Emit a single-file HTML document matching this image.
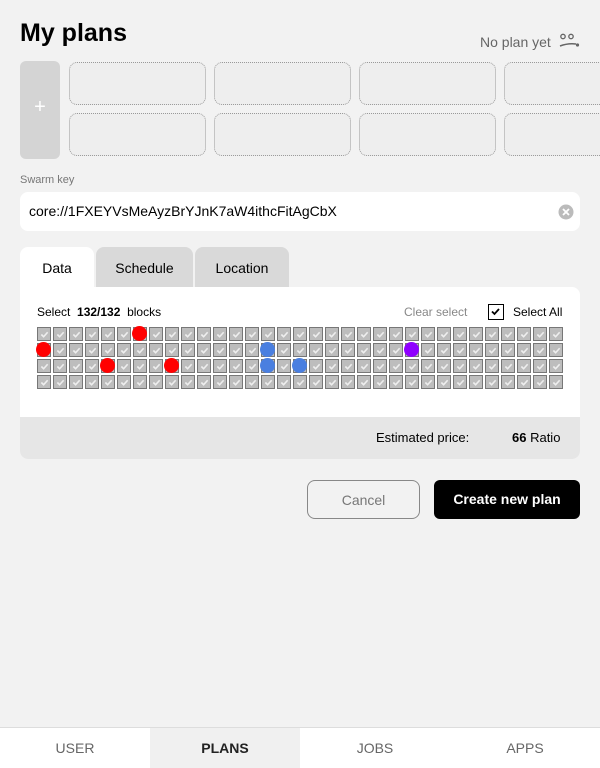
<!DOCTYPE html>
<html><head><meta charset="utf-8"><style>
*{box-sizing:border-box;margin:0;padding:0}
body{width:600px;height:768px;background:#f2f2f2;font-family:"Liberation Sans",sans-serif;position:relative;overflow:hidden;color:#000}
.abs{position:absolute}
h1{position:absolute;left:20px;top:19px;font-size:25px;font-weight:bold}
.slot{position:absolute;border:1px dotted #999;border-radius:8px;background:#eee;width:137px;height:43px}
.tab{position:absolute;top:247px;height:40px;border-radius:8px 8px 0 0;background:#d9d9d9;font-size:14px;text-align:center;line-height:42px}
.cell{position:absolute;width:14px;height:14px;background:#bdbdbd;border:1px solid #777}
.cell svg{position:absolute;left:2px;top:2px}
.dot{position:absolute;width:15px;height:15px;border-radius:50%}
.nav{position:absolute;top:728px;height:40px;width:150px;text-align:center;line-height:40px;font-size:14px;color:#666}
</style></head><body>
<h1>My plans</h1>
<div class="abs" style="left:480px;top:34px;font-size:14px;color:#666">No plan yet</div>
<svg class="abs" style="left:558px;top:33px" width="24" height="16" viewBox="0 0 24 16"><circle cx="5" cy="3.5" r="2.2" fill="none" stroke="#666" stroke-width="1.3"/><circle cx="13" cy="3.5" r="2.2" fill="none" stroke="#666" stroke-width="1.3"/><path d="M2 13 Q10 10 18 11" fill="none" stroke="#666" stroke-width="1.5"/><circle cx="19.5" cy="12" r="1.6" fill="#666"/></svg>
<div class="abs" style="left:20px;top:61px;width:40px;height:98px;background:#d4d4d4;border-radius:6px;color:#fff;font-size:20px;text-align:center;line-height:92px">+</div>
<div class="slot" style="left:69px;top:62px"></div><div class="slot" style="left:214px;top:62px"></div><div class="slot" style="left:359px;top:62px"></div><div class="slot" style="left:504px;top:62px"></div>
<div class="slot" style="left:69px;top:113px"></div><div class="slot" style="left:214px;top:113px"></div><div class="slot" style="left:359px;top:113px"></div><div class="slot" style="left:504px;top:113px"></div>
<div class="abs" style="left:20px;top:174px;font-size:11px;color:#777">Swarm key</div>
<div class="abs" style="left:20px;top:192px;width:560px;height:39px;background:#fff;border-radius:8px;font-size:14px;line-height:39px;padding-left:9px">core://1FXEYVsMeAyzBrYJnK7aW4ithcFitAgCbX</div>
<svg class="abs" style="left:558px;top:204px" width="16" height="16" viewBox="0 0 16 16"><circle cx="8" cy="8" r="7.5" fill="#bbb"/><path d="M5 5L11 11M11 5L5 11" stroke="#fff" stroke-width="1.8"/></svg>
<div class="tab" style="left:20px;width:74px;background:#fff">Data</div>
<div class="tab" style="left:96px;width:97px">Schedule</div>
<div class="tab" style="left:195px;width:94px">Location</div>
<div class="abs" style="left:20px;top:287px;width:560px;height:172px;background:#fff;border-radius:0 8px 8px 8px;overflow:hidden">
<div class="abs" style="left:0;top:130px;width:560px;height:42px;background:#e6e6e6"></div>
<div class="abs" style="left:356px;top:143px;font-size:13px">Estimated price:</div>
<div class="abs" style="left:492px;top:143px;font-size:13px"><b>66</b> Ratio</div>
</div>
<div class="abs" style="left:37px;top:305px;font-size:12px">Select&nbsp; <b>132/132</b>&nbsp; blocks</div>
<div class="abs" style="left:404px;top:305px;font-size:12px;color:#888">Clear select</div>
<div class="abs" style="left:488px;top:304px;width:16px;height:16px;border:1.5px solid #000;background:#fff"><svg width="13" height="13" viewBox="0 0 13 13" style="position:absolute;left:0;top:0"><path d="M3 6.5L5.5 9L10 4" fill="none" stroke="#000" stroke-width="1.8"/></svg></div>
<div class="abs" style="left:513px;top:305px;font-size:12px">Select All</div>
<div id="g"></div>
<div class="abs" style="left:307px;top:480px;width:113px;height:39px;border:1px solid #888;border-radius:8px;text-align:center;line-height:38px;font-size:14px;color:#777">Cancel</div>
<div class="abs" style="left:434px;top:480px;width:146px;height:39px;background:#000;border-radius:6px;text-align:center;line-height:39px;font-size:14px;color:#fff;font-weight:bold">Create new plan</div>
<div class="abs" style="left:0;top:727px;width:600px;height:41px;background:#fff;border-top:1px solid #ddd"></div>
<div class="nav" style="left:0">USER</div>
<div class="nav" style="left:150px;background:#f0f0f0;color:#222;font-weight:bold">PLANS</div>
<div class="nav" style="left:300px">JOBS</div>
<div class="nav" style="left:450px">APPS</div>
<script>
var g=document.getElementById('g'),h='';
for(var r=0;r<4;r++)for(var c=0;c<33;c++){h+='<div class="cell" style="left:'+(37+c*16)+'px;top:'+(327+r*16)+'px"><svg width="9" height="9" viewBox="0 0 10 10"><path d="M1.5 5L4 7.5L8.5 2.5" fill="none" stroke="#eee" stroke-width="1.8"/></svg></div>';}
var d=[[0,6,'#f00'],[1,0,'#f00'],[1,14,'#4a7fe0'],[1,23,'#8f00ff'],[2,4,'#f00'],[2,8,'#f00'],[2,14,'#4a7fe0'],[2,16,'#4a7fe0']];
d.forEach(function(x){h+='<div class="dot" style="background:'+x[2]+';left:'+(37+x[1]*16-1)+'px;top:'+(327+x[0]*16-1)+'px"></div>';});
g.innerHTML=h;
</script>
</body></html>
